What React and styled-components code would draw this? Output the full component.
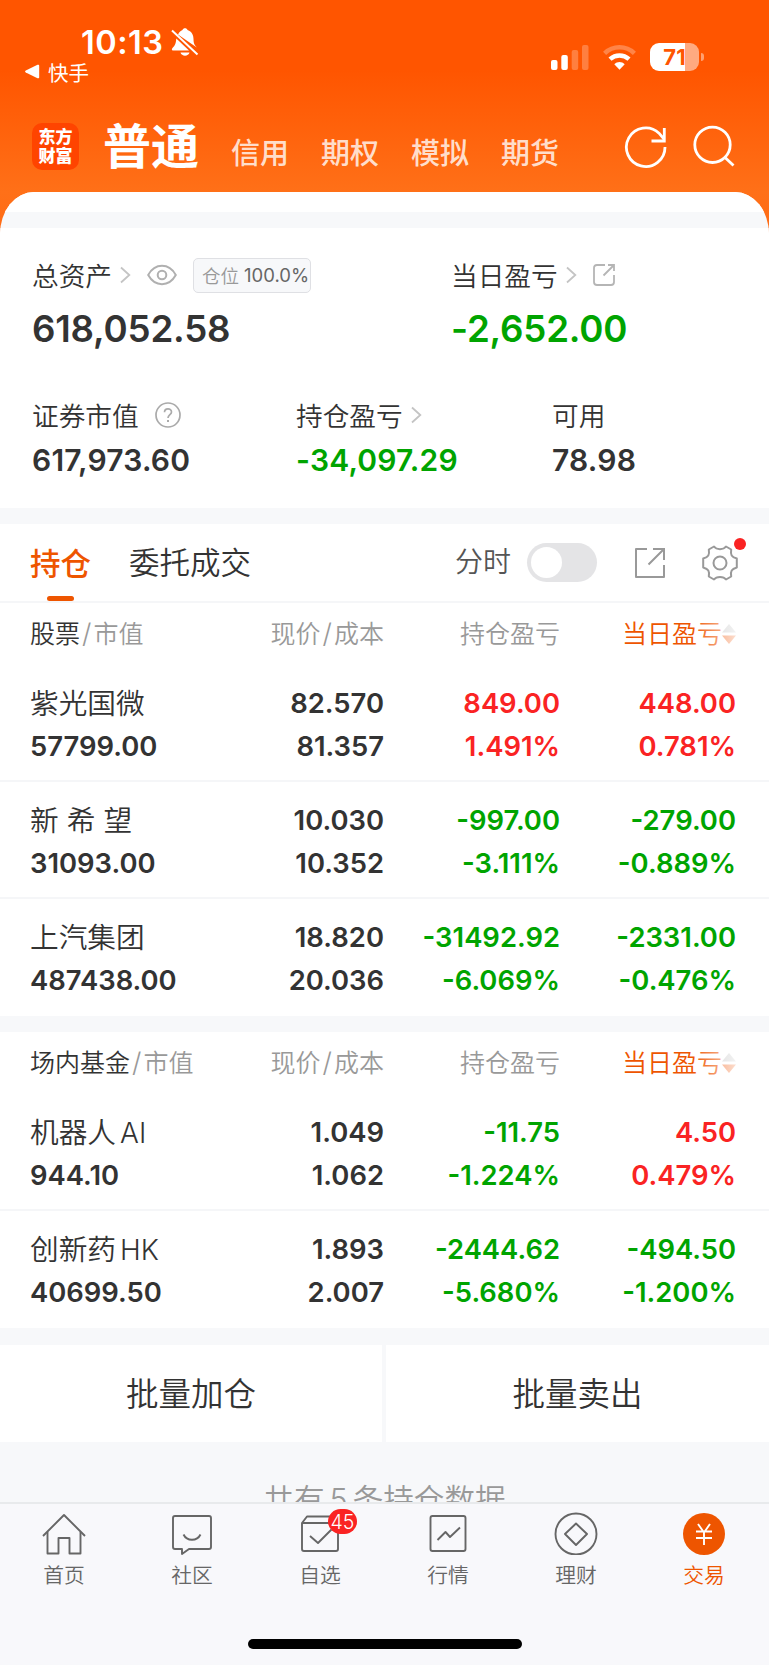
import styled, { createGlobalStyle } from "styled-components";

const GlobalStyle = createGlobalStyle`
  * {
    box-sizing: border-box;
  }
  body {
    margin: 0;
    background: #f7f8fa;
    font-family: Inter, "Noto Sans CJK SC", sans-serif;
    font-weight: 350;
    color: #333;
  }
`;

const colors = {
  up: "#fa2323",
  down: "#00a400",
  brand: "#ee5500",
};

const Screen = styled.div`
  width: 769px;
  height: 1665px;
  display: flex;
  flex-direction: column;
  overflow: hidden;
  background: #f7f8fa linear-gradient(#ff5500 70px, #ff7018 192px, #ff6a14 240px) no-repeat 0 0 / 100% 240px;
`;

const StatusBar = styled.div`
  height: 92px;
  display: flex;
  justify-content: space-between;
  padding: 25px 65px 0 25px;
  color: #fff;
`;

const Clock = styled.div`
  display: flex;
  align-items: center;
  gap: 8px;
  height: 34px;
  padding-left: 56px;
  font-size: 32.5px;
  font-weight: 600;
  letter-spacing: 0.5px;
`;

const BackLink = styled.div`
  display: flex;
  align-items: center;
  gap: 8px;
  height: 25px;
  font-size: 20.5px;
  font-weight: 400;
`;

const StatusIcons = styled.div`
  display: flex;
  align-items: center;
  height: 28px;
  margin-top: 18px;
`;

const Signal = styled.svg`
  margin-right: 14px;
`;

const Wifi = styled.svg`
  margin-right: 14px;
`;

const Battery = styled.div`
  width: 49px;
  height: 28px;
  border-radius: 9px;
  background: linear-gradient(90deg, #fff 35px, #ffaa80 35px);
  color: #ff5500;
  font-size: 22px;
  font-weight: 700;
  line-height: 28px;
  text-align: center;
`;

const BatteryCap = styled.div`
  width: 3px;
  height: 8px;
  margin-left: 2px;
  border-radius: 0 4px 4px 0;
  background: #ffa070;
`;

const NavBar = styled.div`
  height: 100px;
  display: flex;
  align-items: center;
  padding: 8px 33px 0 32px;
`;

const Logo = styled.div`
  width: 47px;
  height: 47px;
  border-radius: 10px;
  background: #ff4400;
  color: #fff;
  font-size: 17px;
  font-weight: 900;
  line-height: 19px;
  padding-top: 5px;
  text-align: center;
`;

const Accounts = styled.div`
  flex: 1;
  display: flex;
  align-items: flex-start;
  gap: 32px;
  padding-top: 8px;
  padding-left: 24px;
`;

const Account = styled.span`
  padding-top: ${(props) => (props.$active ? 0 : 7)}px;
  color: ${(props) => (props.$active ? "#fff" : "rgba(255, 255, 255, 0.8)")};
  font-size: ${(props) => (props.$active ? "48px" : "29px")};
  font-weight: ${(props) => (props.$active ? 700 : 500)};
  line-height: 60px;
`;

const NavIcons = styled.div`
  display: flex;
  gap: 24px;
  padding-top: 2px;
`;

const Sheet = styled.div`
  flex: 1;
  min-height: 0;
  overflow: hidden;
  border-radius: 34px 34px 0 0 / 42px 42px 0 0;
  background: #f7f8fa;
`;

const SheetTop = styled.div`
  height: 20px;
  background: #fff;
`;

const Panel = styled.section`
  margin-top: 16px;
  background: #fff;
`;

const Assets = styled(Panel)`
  height: 280px;
  padding: 29px 32px 0;
`;

const AssetRow = styled.div`
  display: grid;
  grid-template-columns: ${(props) => props.$columns};
  height: ${(props) => props.$height}px;
`;

const Label = styled.div`
  display: flex;
  align-items: center;
  height: 36px;
  padding-bottom: 2px;
  font-size: 26.7px;

  svg {
    flex: none;
    margin-top: 2px;
    margin-left: ${(props) => props.$iconGap || 8}px;
  }

  svg + svg {
    margin-left: 16px;
  }
`;

const Amount = styled.div`
  margin-top: ${(props) => (props.$big ? 13 : 9)}px;
  font-size: ${(props) => (props.$big ? 36.7 : 30)}px;
  font-weight: 600;
  line-height: ${(props) => (props.$big ? 46 : 36)}px;
  letter-spacing: ${(props) => (props.$big ? -0.2 : 0.2)}px;
  color: ${(props) => (props.$down ? colors.down : "#333")};
`;

const PositionTag = styled.span`
  display: flex;
  align-items: center;
  gap: 5px;
  width: 118px;
  height: 35px;
  margin-top: 2px;
  margin-left: 16px;
  padding-left: 8px;
  border: 1px solid #dfe0e4;
  border-radius: 5px;
  background: #f7f8fa;
  color: #999;
  font-size: 18.5px;
  white-space: nowrap;

  b {
    color: #666;
    font-weight: 400;
  }
`;

const Tabs = styled.div`
  display: flex;
  height: 79px;
  padding-left: 30px;
  padding-right: 31px;
  border-bottom: 2px solid #f5f6f8;
  line-height: 79px;
`;

const Tab = styled.div`
  display: flex;
  flex-direction: column;
  align-items: center;
  justify-content: flex-end;
  margin-right: ${(props) => (props.$active ? 38 : 0)}px;
  font-size: 30.5px;
  font-weight: ${(props) => (props.$active ? 500 : 350)};
  color: ${(props) => (props.$active ? colors.brand : "#333")};

  span {
    height: ${(props) => (props.$active ? 72 : 78)}px;
  }

  &::after {
    content: "";
    display: ${(props) => (props.$active ? "block" : "none")};
    width: 27px;
    height: 6px;
    border-radius: 3px;
    background: ${colors.brand};
  }
`;

const TabTools = styled.div`
  display: flex;
  align-items: center;
  margin-left: auto;
  font-size: 28px;
  color: #555;
`;

const Toggle = styled.div`
  width: 70px;
  height: 39px;
  margin: 0 38px 0 16px;
  padding: 4px;
  border-radius: 20px;
  background: #e4e4e6;

  &::before {
    content: "";
    display: block;
    width: 31px;
    height: 31px;
    border-radius: 50%;
    background: #fff;
  }
`;

const Settings = styled.div`
  position: relative;
  display: flex;
  margin-left: 37px;
`;

const RedDot = styled.i`
  position: absolute;
  top: -7px;
  right: -8px;
  width: 12px;
  height: 12px;
  border-radius: 50%;
  background: #fa2323;
`;

const Columns = styled.div`
  display: grid;
  grid-template-columns: 180px 174px 176px 176px;
  padding-left: 30px;
`;

const TableHead = styled(Columns)`
  height: 62px;
  line-height: 62px;
  font-size: 25px;
  color: #999;

  em {
    color: #333;
    font-style: normal;
  }
`;

const HeadCell = styled.div`
  text-align: ${(props) => (props.$left ? "left" : "right")};
  white-space: nowrap;
`;

const Slash = styled.span`
  margin: 0 2px;
  font-size: 27px;
  font-weight: 300;
`;

const SortCell = styled.div`
  position: relative;
  display: flex;
  align-items: center;
  justify-content: flex-end;
  color: ${colors.brand};

  &::after {
    content: "";
    position: absolute;
    right: 0;
    width: 44px;
    height: 36px;
    background: linear-gradient(90deg, rgba(255, 255, 255, 0), rgba(255, 255, 255, 0.75));
  }
`;

const HoldingRow = styled(Columns)`
  height: 117px;
  padding-top: 17px;
  border-bottom: 2px solid ${(props) => (props.$last ? "transparent" : "#f5f6f8")};
`;

const Cell = styled.div`
  display: flex;
  flex-direction: column;
  align-items: ${(props) => (props.$left ? "flex-start" : "flex-end")};
  color: ${(props) => colors[props.$tone] || "#333"};
  font-size: 27.4px;
  font-weight: 600;
  line-height: 42.5px;
  white-space: pre;
`;

const Name = styled.span`
  height: 42.5px;
  font-size: 28.7px;
  font-weight: 350;
  line-height: 44.5px;

  small {
    margin-left: 4px;
    font-size: 28px;
  }
`;

const Actions = styled.div`
  display: grid;
  grid-template-columns: 382px 383px;
  gap: 4px;
  margin-top: 17px;
`;

const Action = styled.div`
  height: 97px;
  background: #fff;
  font-size: 32.5px;
  line-height: 100px;
  text-align: center;
`;

const Summary = styled.div`
  margin-top: 38px;
  color: #999;
  font-size: 30.6px;
  line-height: 40px;
  text-align: center;

  span {
    margin: 0 5px;
  }
`;

const TabBar = styled.nav`
  flex: none;
  display: flex;
  flex-direction: column;
  height: 163px;
  border-top: 2px solid #e8eaec;
  background: #f8f8fb;
`;

const TabItems = styled.div`
  display: grid;
  grid-template-columns: repeat(6, 128px);
`;

const TabItem = styled.div`
  position: relative;
  display: flex;
  flex-direction: column;
  align-items: center;
  padding-top: 8px;
  color: ${(props) => (props.$active ? colors.brand : "#666")};
  font-size: 20.8px;
  line-height: 30px;

  svg {
    margin-bottom: 6px;
  }
`;

const Badge = styled.span`
  position: absolute;
  top: 5px;
  left: 72px;
  width: 29px;
  height: 25px;
  border-radius: 13px;
  background: #fa2323;
  color: #fff;
  font-size: 19.5px;
  line-height: 26px;
  text-align: center;
`;

const HomeIndicator = styled.div`
  width: 274px;
  height: 10px;
  margin: auto auto 16px;
  border-radius: 5px;
  background: #000;
`;

const Chevron = () => (
  <svg width="11" height="18" viewBox="0 0 11 18" fill="none" stroke="#c4c4c4" strokeWidth="1.8">
    <path d="M1 1.5 9.3 9 1 16.5" />
  </svg>
);

const Eye = () => (
  <svg width="30" height="22" viewBox="0 0 30 22" fill="none" stroke="#b0b0b0" strokeWidth="2">
    <path d="M1.2 11C8 -1.2 22 -1.2 28.8 11 22 23.2 8 23.2 1.2 11Z" />
    <circle cx="15" cy="11" r="4.3" />
  </svg>
);

const Help = () => (
  <svg width="26" height="26" viewBox="0 0 26 26" fill="none" stroke="#aaa" strokeWidth="1.7">
    <circle cx="13" cy="13" r="12" />
    <path d="M9.5 10.3C9.5 5.6 16.5 5.8 16.5 10 16.5 12.6 13 12.8 13 16" />
    <path d="M13 18v2" strokeWidth="2" />
  </svg>
);

const ShareSmall = () => (
  <svg width="22" height="22" viewBox="0 0 22 22" fill="none" stroke="#b5b5b5" strokeWidth="1.8">
    <path d="M12 1H4a3 3 0 0 0-3 3v14a3 3 0 0 0 3 3h14a3 3 0 0 0 3-3v-7" />
    <path d="M15 1h6v6M21 1 10.500 11.500" />
  </svg>
);

const ShareIcon = () => (
  <svg width="30" height="30" viewBox="0 0 30 30" fill="none" stroke="#999" strokeWidth="2">
    <path d="M12 1H1v28h28V17" strokeLinejoin="round" />
    <path d="M18 1h11v11M29 1 13.500 16.500" />
  </svg>
);

const Gear = () => (
  <svg width="36" height="36" viewBox="0 0 36 36" fill="none" stroke="#999" strokeWidth="2">
    <path
      strokeLinejoin="round"
      d="M12 1.500C14.500 5 21.500 5 24 1.500L29.200 4.500C28.300 10 29.500 12 34.800 13.500V22.500C29.500 24 28.300 26 29.200 31.500L24 34.500C21.500 31 14.500 31 12 34.500L6.800 31.500C7.700 26 6.500 24 1.200 22.500V13.500C6.500 12 7.700 10 6.800 4.500Z"
    />
    <circle cx="18" cy="18" r="6.500" />
  </svg>
);

const SortIcon = () => (
  <svg width="14" height="20" viewBox="0 0 14 20">
    <path d="M7 0 14 8.500H0Z" fill="#ccc" />
    <path d="M0 11.500h14L7 20Z" fill="#f47a3c" />
  </svg>
);

const BellOff = () => (
  <svg width="28" height="30" viewBox="0 0 28 30" fill="#fff">
    <path d="M7 7.500C8.500 4.500 10.500 3.500 11.500 3 12 .5 16 .5 16.500 3 21 4.500 22.500 8.500 22.500 12c0 4.500 1 6 3.300 8.500Z" />
    <path d="M5.300 11.500 18 23.500H2c-1.500 0-1.300-1.500-.5-2.500 2.500-2.700 3.300-4 3.800-9.500Z" />
    <path d="M9.500 25.500h9c-1 4.200-8 4.200-9 0Z" />
    <path d="M1 3.500 26.500 27.500" stroke="#fff" strokeWidth="2" />
  </svg>
);

const tabIcons = {
  home: (
    <>
      <path d="M1 23 22 2l21 21" />
      <path d="M5.500 19v21.500h11V25h11v15.500h11V19" />
    </>
  ),
  community: (
    <>
      <path d="M5 3h34a2 2 0 0 1 2 2v29a2 2 0 0 1-2 2H19l-7 5v-5H5a2 2 0 0 1-2-2V5a2 2 0 0 1 2-2Z" />
      <path d="M13.500 21.500C17 28.500 27 28.500 30.500 21.500" />
    </>
  ),
  watch: (
    <>
      <path d="M4 10v26a2 2 0 0 0 2 2h32a2 2 0 0 0 2-2V10M4 10l5-6.500h27L40 10ZM4 10h36" />
      <path d="m12 23 8 7L33.500 16.500" />
    </>
  ),
  market: (
    <>
      <rect x="4.500" y="3" width="35" height="35" rx="2" />
      <path d="m11.500 27 8-8 4.500 5 10-9.500" />
    </>
  ),
  wealth: (
    <>
      <circle cx="22" cy="21" r="20.500" />
      <path d="m22 10.500 11 10.500-11 11L11 21Z" />
    </>
  ),
  trade: (
    <>
      <circle cx="22" cy="21" r="21" fill="#ee5500" stroke="none" />
      <path d="m16 11 6 8.500L28 11M22 19.500V32M14 18.500h16M14 25h16" stroke="#fff" />
    </>
  ),
};

const TabIcon = ({ name }) => (
  <svg
    width="44"
    height="43"
    viewBox="0 -1 44 43"
    fill="none"
    stroke="#666"
    strokeWidth="1.9"
    strokeLinejoin="round"
  >
    {tabIcons[name]}
  </svg>
);

const accounts = ["普通", "信用", "期权", "模拟", "期货"];

const stocks = [
  { name: "紫光国微", value: "57799.00", price: "82.570", cost: "81.357", profit: "849.00", profitRate: "1.491%", day: "448.00", dayRate: "0.781%" },
  { name: "新 希 望", value: "31093.00", price: "10.030", cost: "10.352", profit: "-997.00", profitRate: "-3.111%", day: "-279.00", dayRate: "-0.889%" },
  { name: "上汽集团", value: "487438.00", price: "18.820", cost: "20.036", profit: "-31492.92", profitRate: "-6.069%", day: "-2331.00", dayRate: "-0.476%" },
];

const funds = [
  { name: "机器人", suffix: "AI", value: "944.10", price: "1.049", cost: "1.062", profit: "-11.75", profitRate: "-1.224%", day: "4.50", dayRate: "0.479%" },
  { name: "创新药", suffix: "HK", value: "40699.50", price: "1.893", cost: "2.007", profit: "-2444.62", profitRate: "-5.680%", day: "-494.50", dayRate: "-1.200%" },
];

const tabItems = [
  { icon: "home", label: "首页" },
  { icon: "community", label: "社区" },
  { icon: "watch", label: "自选", badge: 45 },
  { icon: "market", label: "行情" },
  { icon: "wealth", label: "理财" },
  { icon: "trade", label: "交易", active: true },
];

const tone = (value) => (value.startsWith("-") ? "down" : "up");

const Holdings = ({ title, items }) => (
  <>
    <TableHead>
      <HeadCell $left>
        <em>{title}</em>
        <Slash>/</Slash>市值
      </HeadCell>
      <HeadCell>
        现价<Slash>/</Slash>成本
      </HeadCell>
      <HeadCell>持仓盈亏</HeadCell>
      <SortCell>
        当日盈亏
        <SortIcon />
      </SortCell>
    </TableHead>
    {items.map((item, index) => (
      <HoldingRow key={item.name} $last={index === items.length - 1}>
        <Cell $left>
          <Name>
            {item.name}
            {item.suffix && <small>{item.suffix}</small>}
          </Name>
          <span>{item.value}</span>
        </Cell>
        <Cell>
          <span>{item.price}</span>
          <span>{item.cost}</span>
        </Cell>
        <Cell $tone={tone(item.profit)}>
          <span>{item.profit}</span>
          <span>{item.profitRate}</span>
        </Cell>
        <Cell $tone={tone(item.day)}>
          <span>{item.day}</span>
          <span>{item.dayRate}</span>
        </Cell>
      </HoldingRow>
    ))}
  </>
);

const App = () => {
  return (
    <>
      <GlobalStyle />
      <Screen>
        <StatusBar>
          <div>
            <Clock>
              10:13
              <BellOff />
            </Clock>
            <BackLink>
              <svg width="15" height="15" viewBox="0 0 15 15" fill="#fff">
                <path d="M.8 6.500 12.500.8C13.500.4 14.200.8 14.200 1.800v11.400c0 1-.7 1.400-1.700 1L.8 8.500C-.2 8-.2 7 .8 6.500Z" />
              </svg>
              快手
            </BackLink>
          </div>
          <StatusIcons>
            <Signal width="38" height="25" viewBox="0 0 38 25" fill="#fff">
              <rect x="0" y="15" width="6.500" height="10" rx="2" />
              <rect x="10.300" y="10" width="6.500" height="15" rx="2" />
              <rect x="20.700" y="5" width="6.500" height="20" rx="2" opacity=".25" />
              <rect x="31" y="0" width="6.500" height="25" rx="2" opacity=".25" />
            </Signal>
            <Wifi width="33" height="25" viewBox="0 0 33 25" fill="none" stroke="#fff" strokeWidth="4.500">
              <path d="M1.600 8.300C10 .3 23 .3 31.400 8.300" opacity=".28" />
              <path d="M7 14.200c5.500-5 13.500-5 19 0" />
              <path d="M11.300 19.200c3-2.800 7.400-2.800 10.400 0L16.500 24.800Z" fill="#fff" stroke="none" />
            </Wifi>
            <Battery>71</Battery>
            <BatteryCap />
          </StatusIcons>
        </StatusBar>
        <NavBar>
          <Logo>
            东方
            <br />
            财富
          </Logo>
          <Accounts>
            {accounts.map((name, index) => (
              <Account key={name} $active={index === 0}>
                {name}
              </Account>
            ))}
          </Accounts>
          <NavIcons>
            <svg width="44" height="44" viewBox="0 0 44 44" fill="none" stroke="#fff" strokeWidth="2.800">
              <path d="M41 22A19.300 19.300 0 1 1 35 8.200L40 14" />
              <path d="M40.300 3v13H27.500" />
            </svg>
            <svg width="44" height="44" viewBox="0 0 44 44" fill="none" stroke="#fff" strokeWidth="2.800">
              <circle cx="20.500" cy="19.800" r="17.700" />
              <path d="m33 32.500 8.500 8" />
            </svg>
          </NavIcons>
        </NavBar>
        <Sheet>
          <SheetTop />
          <Assets>
            <AssetRow $columns="419px 1fr" $height={140}>
              <div>
                <Label>
                  总资产
                  <Chevron />
                  <Eye />
                  <PositionTag>
                    仓位<b>100.0%</b>
                  </PositionTag>
                </Label>
                <Amount $big>618,052.58</Amount>
              </div>
              <div>
                <Label>
                  当日盈亏
                  <Chevron />
                  <ShareSmall />
                </Label>
                <Amount $big $down>
                  -2,652.00
                </Amount>
              </div>
            </AssetRow>
            <AssetRow $columns="264px 256px 1fr" $height={90}>
              <div>
                <Label $iconGap={16}>
                  证券市值
                  <Help />
                </Label>
                <Amount>617,973.60</Amount>
              </div>
              <div>
                <Label>
                  持仓盈亏
                  <Chevron />
                </Label>
                <Amount $down>-34,097.29</Amount>
              </div>
              <div>
                <Label>可用</Label>
                <Amount>78.98</Amount>
              </div>
            </AssetRow>
          </Assets>
          <Panel>
            <Tabs>
              <Tab $active>
                <span>持仓</span>
              </Tab>
              <Tab>
                <span>委托成交</span>
              </Tab>
              <TabTools>
                分时
                <Toggle />
                <ShareIcon />
                <Settings>
                  <Gear />
                  <RedDot />
                </Settings>
              </TabTools>
            </Tabs>
            <Holdings title="股票" items={stocks} />
          </Panel>
          <Panel>
            <Holdings title="场内基金" items={funds} />
          </Panel>
          <Actions>
            <Action>批量加仓</Action>
            <Action>批量卖出</Action>
          </Actions>
          <Summary>
            共有<span>5</span>条持仓数据
          </Summary>
        </Sheet>
        <TabBar>
          <TabItems>
            {tabItems.map((item) => (
              <TabItem key={item.label} $active={item.active}>
                <TabIcon name={item.icon} />
                {item.label}
                {item.badge && <Badge>{item.badge}</Badge>}
              </TabItem>
            ))}
          </TabItems>
          <HomeIndicator />
        </TabBar>
      </Screen>
    </>
  );
};

export default App;
